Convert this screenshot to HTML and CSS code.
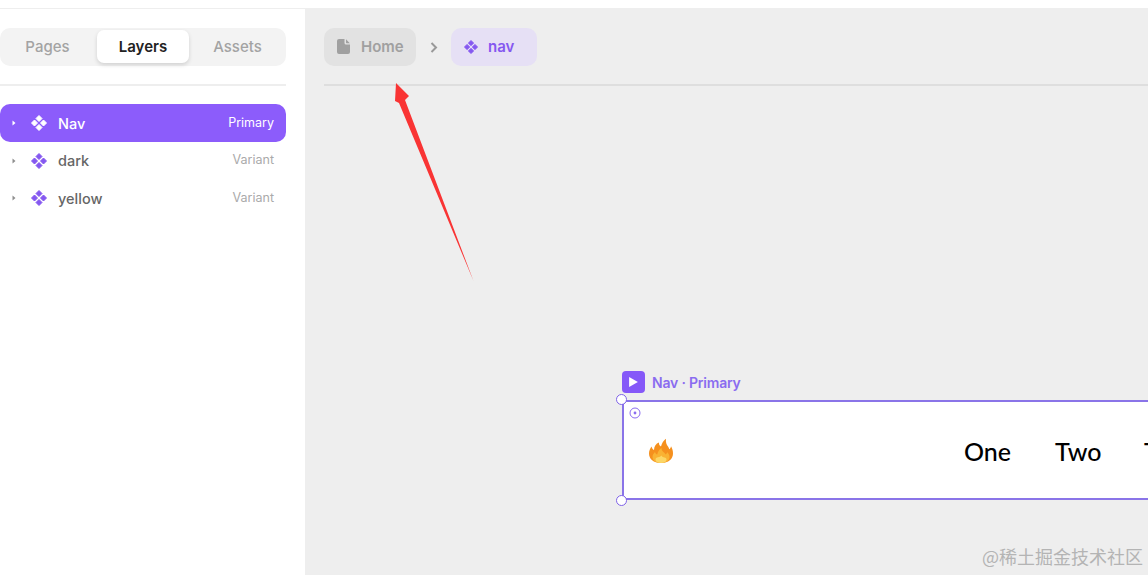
FILE: index.html
```html
<!DOCTYPE html>
<html lang="en">
<head>
    <meta charset="UTF-8">
    <title>Layers</title>
    <link rel="stylesheet" href="styles.css">
</head>
<body>

<div class="topBar"></div>

<div class="main">
    <aside class="sidebar">
        <div class="tabs">
            <div class="tab tabPages">Pages</div>
            <div class="tab tabActive">Layers</div>
            <div class="tab tabAssets">Assets</div>
        </div>
        <div class="divider"></div>

        <div class="layer layerActive">
            <svg class="caret" viewBox="0 0 4 6"><path d="M0.5 0.5 L3.5 3 L0.5 5.5 Z"/></svg>
            <svg class="diamonds" viewBox="0 0 16 16"><path d="M8 0.5 L11 3.5 L8 6.5 L5 3.5 Z M3.5 5 L6.5 8 L3.5 11 L0.5 8 Z M12.5 5 L15.5 8 L12.5 11 L9.5 8 Z M8 9.5 L11 12.5 L8 15.5 L5 12.5 Z"/></svg>
            <span class="layerName">Nav</span>
            <span class="layerTag">Primary</span>
        </div>
        <div class="layer">
            <svg class="caret" viewBox="0 0 4 6"><path d="M0.5 0.5 L3.5 3 L0.5 5.5 Z"/></svg>
            <svg class="diamonds" viewBox="0 0 16 16"><path d="M8 0.5 L11 3.5 L8 6.5 L5 3.5 Z M3.5 5 L6.5 8 L3.5 11 L0.5 8 Z M12.5 5 L15.5 8 L12.5 11 L9.5 8 Z M8 9.5 L11 12.5 L8 15.5 L5 12.5 Z"/></svg>
            <span class="layerName">dark</span>
            <span class="layerTag">Variant</span>
        </div>
        <div class="layer">
            <svg class="caret" viewBox="0 0 4 6"><path d="M0.5 0.5 L3.5 3 L0.5 5.5 Z"/></svg>
            <svg class="diamonds" viewBox="0 0 16 16"><path d="M8 0.5 L11 3.5 L8 6.5 L5 3.5 Z M3.5 5 L6.5 8 L3.5 11 L0.5 8 Z M12.5 5 L15.5 8 L12.5 11 L9.5 8 Z M8 9.5 L11 12.5 L8 15.5 L5 12.5 Z"/></svg>
            <span class="layerName">yellow</span>
            <span class="layerTag">Variant</span>
        </div>
    </aside>

    <main class="canvas">
        <div class="crumbs">
            <div class="crumb crumbHome">
                <svg class="fileIcon" viewBox="0 0 13 15"><path d="M2 0 H7.500 V4 Q7.500 5.500 9 5.500 H13 V13 Q13 15 11 15 H2 Q0 15 0 13 V2 Q0 0 2 0 Z M9 0.300 L12.800 4.200 H9.600 Q9 4.200 9 3.600 Z"/></svg>
                Home
            </div>
            <svg class="chevron" viewBox="0 0 8 11"><path d="M1.500 1 L6 5.500 L1.500 10"/></svg>
            <div class="crumb crumbNav">
                <svg class="diamonds" viewBox="0 0 16 16"><path d="M8 0.5 L11 3.5 L8 6.5 L5 3.5 Z M3.5 5 L6.5 8 L3.5 11 L0.5 8 Z M12.5 5 L15.5 8 L12.5 11 L9.5 8 Z M8 9.5 L11 12.5 L8 15.5 L5 12.5 Z"/></svg>
                nav
            </div>
        </div>
        <div class="canvasLine"></div>

        <!-- frame on the free canvas -->
        <div class="frameLabel">
            <span class="playBox"><svg viewBox="0 0 10 11"><path d="M1 1 L9 5.500 L1 10 Z"/></svg></span>
            Nav · Primary
        </div>
        <div class="frame">
            <span class="handle handleTop"></span>
            <span class="handle handleBottom"></span>
            <svg class="target" viewBox="0 0 12 12"><circle cx="6" cy="6" r="5" fill="none" stroke="#8a6cf0" stroke-width="1"/><circle cx="6" cy="6" r="1.400" fill="#8a6cf0"/></svg>
            <svg class="flame" viewBox="0 0 26 26">
                <path fill="#f5901e" d="M13 25 C5.500 25 1 21 1 15.500 C1 12.500 2.200 10.500 3.500 8.500 C4 10.500 4.800 11.500 6 12 C6.200 8 8 5.500 11 4.500 C10.800 6.500 11.500 7.800 13 8.500 C13.800 5.500 15.500 2.500 18 0.800 C17.500 4.500 18.500 6.500 20 8.500 C20.600 9.300 21 10.200 21.200 11.300 C22.300 10.600 22.800 9.600 23 8.300 C24.400 10.500 25 12.800 25 15.500 C25 21 20.500 25 13 25 Z"/>
                <path fill="#f9b233" d="M13 25 C7.500 25 4.500 22 4.500 19 C4.500 17 5.500 15.500 7 14 C7.500 15.500 8.200 16.300 9.300 16.600 C9.500 14 11 11.500 13.500 10 C13.500 12.500 15 13.800 16.500 15 C17 15.500 17.400 16 17.700 16.500 C18.500 16 19 15.200 19.200 14.300 C20.700 15.700 21.500 17.200 21.500 19 C21.500 22 18.500 25 13 25 Z"/>
                <path fill="#fcd666" d="M13 25 C9.500 25 7.500 23.500 7.500 21.500 C7.500 20.300 8.500 19.500 10 19.300 C11.500 19.100 12.500 18.500 13.300 17.500 C14 18.800 15.300 19.300 16.500 19.500 C17.800 19.800 18.500 20.500 18.500 21.500 C18.500 23.500 16.500 25 13 25 Z"/>
            </svg>
            <span class="navItem navOne">One</span>
            <span class="navItem navTwo">Two</span>
            <span class="navItem navThree">Three</span>
        </div>

        <div class="watermark">@稀土掘金技术社区</div>
    </main>
</div>

<!-- annotation drawn over the screenshot -->
<svg class="arrow" viewBox="0 0 110 215"><path d="M16 8 L29 21 L25 25 L93.500 206 L19 28 L15 26 Z" fill="#f93434"/></svg>

</body>
</html>
```

FILE: styles.css
```css
body {
    font-family: 'Inter', sans-serif;
    margin: 0;
    padding: 0;
    width: 1148px;
    height: 575px;
    overflow: hidden;
    background-color: #fff;
    color: #282f33;
}

.topBar {
    height: 8px;
    border-bottom: 1px solid #eeeeee;
}

.main {
    display: flex;
    height: 566px;
}

.sidebar {
    width: 305px;
    flex-shrink: 0;
    padding-top: 19px;
    box-sizing: border-box;
}

.tabs {
    width: 286px;
    height: 38px;
    box-sizing: border-box;
    padding-top: 2px;
    display: flex;
    background-color: #f3f3f3;
    border-radius: 10px;
}

.tab {
    height: 33px;
    line-height: 33px;
    text-align: center;
    font-size: 15px;
    font-weight: 500;
    color: #a3a3a3;
}

.tabPages {
    width: 97px;
    box-sizing: border-box;
    padding-right: 2px;
}

.tabActive {
    width: 92px;
    background-color: #fff;
    color: #222;
    font-weight: 600;
    border-radius: 7px;
    box-shadow: 0 2px 4px rgba(0, 0, 0, 0.14);
}

.tabAssets {
    width: 97px;
}

.divider {
    width: 286px;
    height: 2px;
    margin-top: 18px;
    margin-bottom: 18px;
    background-color: #eeeeee;
}

.layer {
    width: 286px;
    height: 37.5px;
    box-sizing: border-box;
    padding-left: 12px;
    padding-right: 12px;
    display: flex;
    align-items: center;
    color: #666;
}

.layerActive {
    height: 38px;
    background-color: #8c5cfb;
    border-radius: 10px;
    color: #fff;
}

.caret {
    width: 4px;
    height: 6px;
    fill: #8f8f8f;
    margin-right: 15px;
}

.layerActive .caret {
    fill: #fff;
}

.diamonds {
    width: 16px;
    height: 16px;
    fill: #8558f0;
    stroke: #8558f0;
    stroke-width: 1;
    stroke-linejoin: round;
}

.layerActive .diamonds {
    fill: #fff;
    stroke: #fff;
}

.layerName {
    margin-left: 11px;
    font-size: 14.5px;
    font-weight: 500;
}

.layerTag {
    margin-left: auto;
    font-size: 12.5px;
    color: #aaa;
    position: relative;
    top: -1px;
}

.layerActive .layerTag {
    color: #fff;
}

.canvas {
    flex: 1;
    position: relative;
    background-color: #eeeeee;
    padding-left: 19px;
    padding-top: 19px;
    overflow: hidden;
}

.crumbs {
    display: flex;
    align-items: center;
    height: 38px;
}

.crumb {
    height: 38px;
    display: flex;
    align-items: center;
    box-sizing: border-box;
    padding-bottom: 1px;
    border-radius: 10px;
    font-size: 15px;
    font-weight: 600;
}

.crumbHome {
    width: 92px;
    padding-left: 13px;
    background-color: #e2e2e2;
    color: #a0a0a0;
}

.fileIcon {
    width: 13px;
    height: 15px;
    fill: #a0a0a0;
    margin-right: 11px;
}

.chevron {
    width: 8px;
    height: 11px;
    margin-left: 14px;
    margin-right: 13px;
    fill: none;
    stroke: #999;
    stroke-width: 2;
}

.crumbNav {
    width: 86px;
    padding-left: 13px;
    background-color: #e6e0f5;
    color: #8558f0;
}

.crumbNav .diamonds {
    width: 14px;
    height: 14px;
    margin-right: 10px;
}

.canvasLine {
    height: 2px;
    margin-top: 18px;
    background-color: #dedede;
}

.frameLabel {
    position: absolute;
    left: 317px;
    top: 362px;
    display: flex;
    align-items: center;
    font-size: 14px;
    font-weight: 600;
    letter-spacing: -0.2px;
    color: #8a6cf0;
}

.playBox {
    width: 23px;
    height: 22px;
    margin-right: 7px;
    border-radius: 4px;
    background-color: #8558f8;
    display: flex;
    align-items: center;
    justify-content: center;
}

.playBox svg {
    width: 11px;
    height: 12px;
    fill: #fff;
}

.frame {
    position: absolute;
    left: 317px;
    top: 391px;
    width: 900px;
    height: 96px;
    background-color: #fff;
    border: 2px solid #8a74e8;
    border-right: none;
}

.handle {
    position: absolute;
    left: -8px;
    width: 9px;
    height: 9px;
    background-color: #fff;
    border: 1.500px solid #7f62e8;
    border-radius: 50%;
}

.handleTop {
    top: -8px;
}

.handleBottom {
    bottom: -8px;
}

.target {
    position: absolute;
    left: 5px;
    top: 5px;
    width: 12px;
    height: 12px;
}

.flame {
    position: absolute;
    left: 24px;
    top: 36px;
    width: 26px;
    height: 26px;
}

/* no hand-lettered font here, a heavier sans sits closest */
.navItem {
    position: absolute;
    top: 34px;
    font-family: 'Lato', sans-serif;
    font-size: 25px;
    font-weight: 500;
    line-height: 30px;
    color: #000;
}

.navOne {
    left: 340px;
}

.navTwo {
    left: 431px;
}

.navThree {
    left: 520px;
}

.watermark {
    position: absolute;
    right: 5px;
    bottom: 6px;
    font-family: 'Noto Sans CJK SC', serif;
    font-size: 18px;
    color: #b4b4b4;
}

.arrow {
    position: absolute;
    left: 380px;
    top: 75px;
    width: 110px;
    height: 215px;
}
```
